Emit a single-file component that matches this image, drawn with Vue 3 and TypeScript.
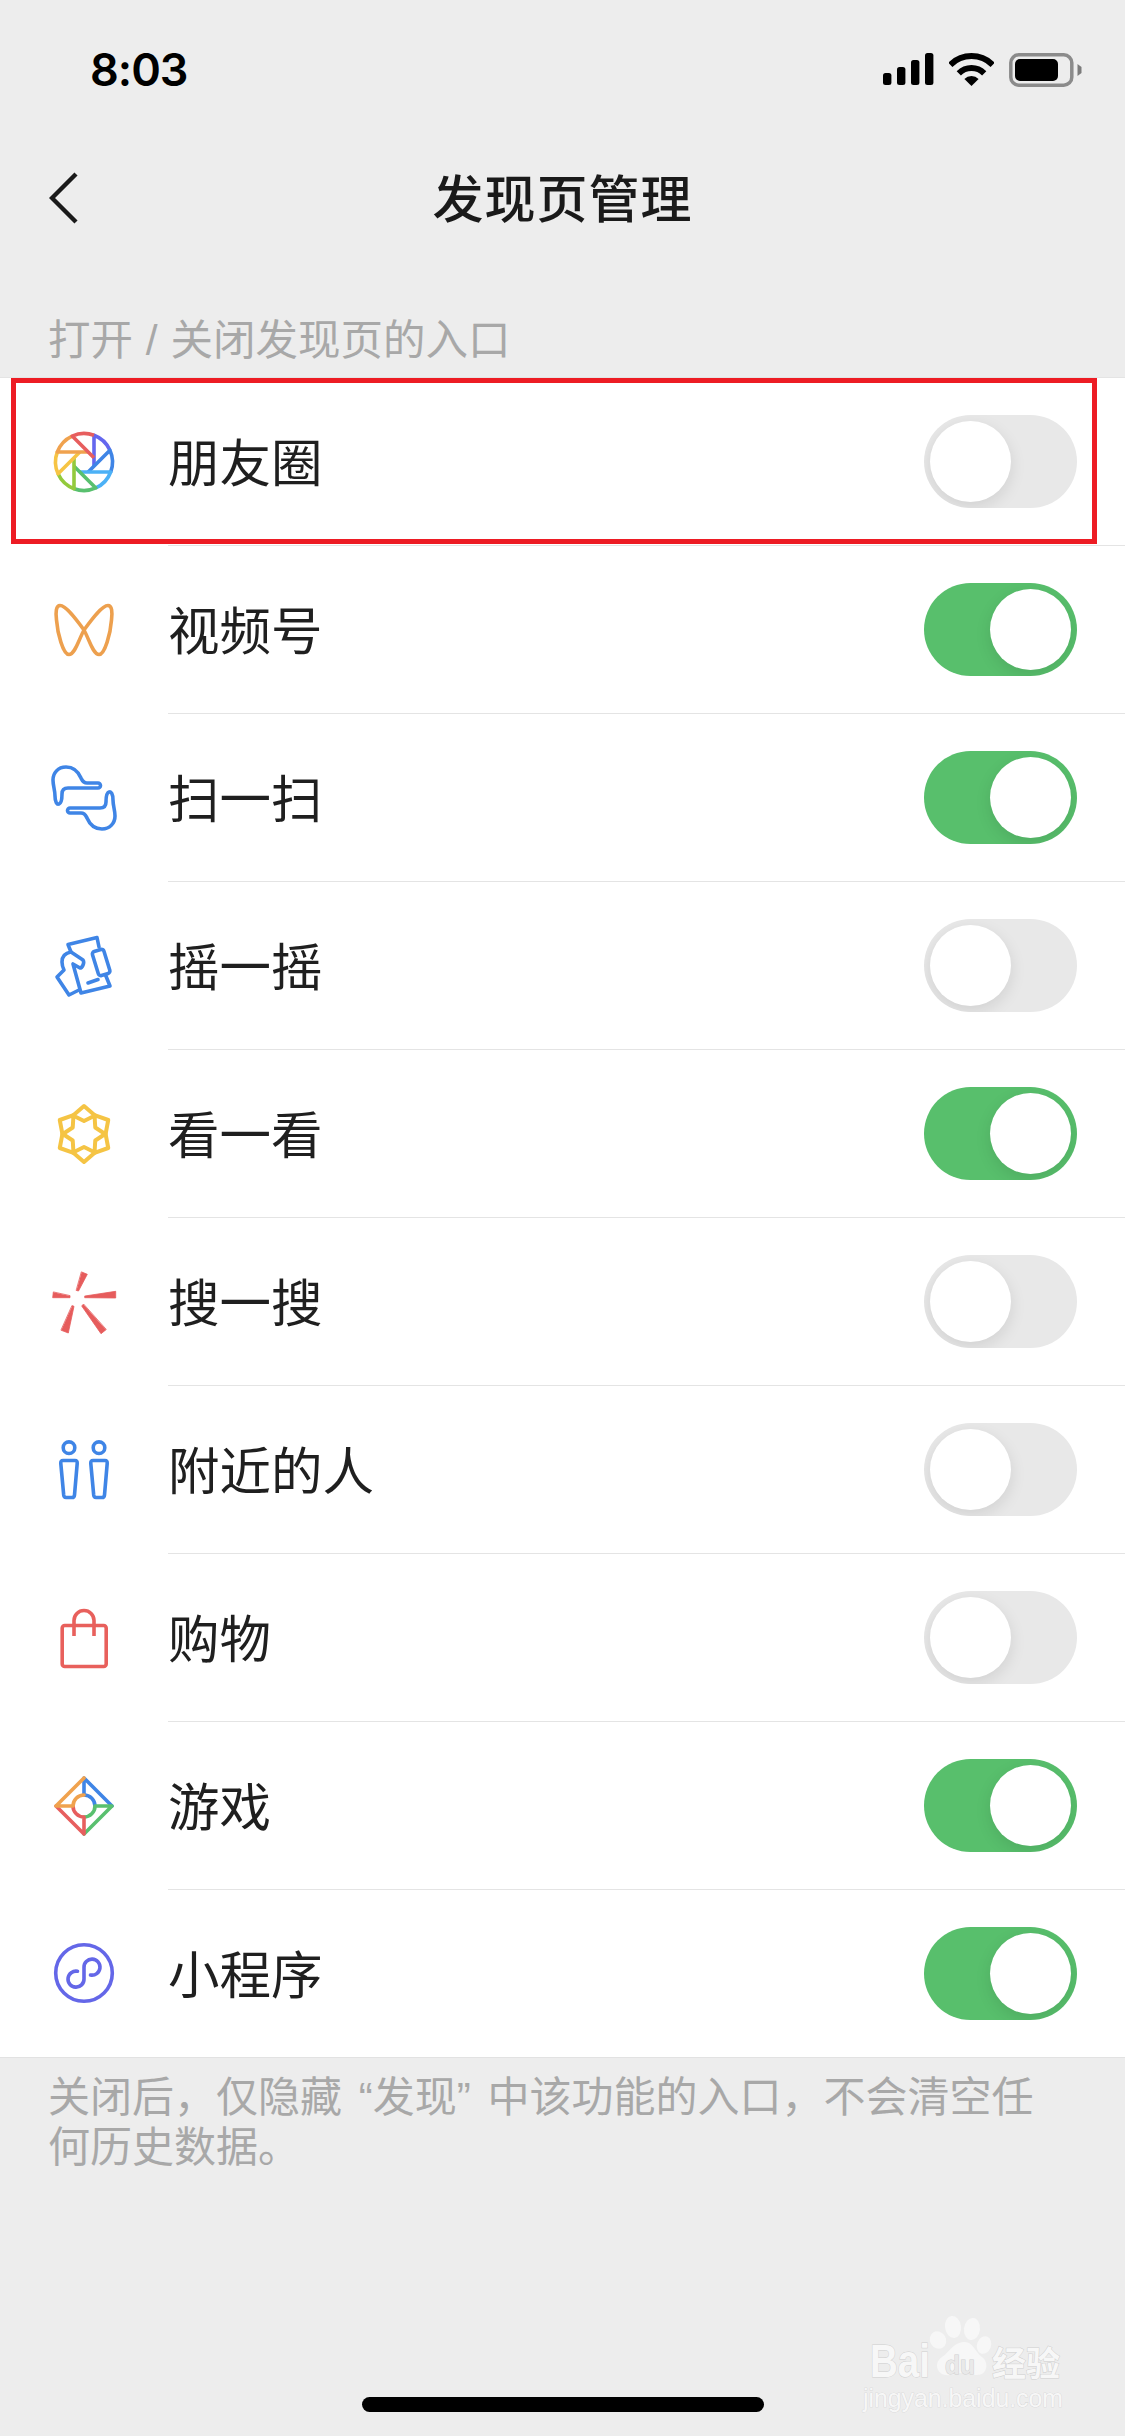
<script setup lang="ts">
interface Entry {
  label: string
  icon: string
  on: boolean
}

const entries: Entry[] = [
  { label: '朋友圈', icon: 'moments', on: false },
  { label: '视频号', icon: 'channels', on: true },
  { label: '扫一扫', icon: 'scan', on: true },
  { label: '摇一摇', icon: 'shake', on: false },
  { label: '看一看', icon: 'look', on: true },
  { label: '搜一搜', icon: 'search', on: false },
  { label: '附近的人', icon: 'nearby', on: false },
  { label: '购物', icon: 'shop', on: false },
  { label: '游戏', icon: 'game', on: true },
  { label: '小程序', icon: 'mini', on: true },
]

const bladeColors = ['#6467ee', '#3f85e6', '#4cb1f6', '#59c06f', '#93ca3c', '#f6c444', '#f0a24e', '#e75e5e']
const gameColors = ['#3f85e6', '#59c06f', '#e75e5e', '#f0a24e']
const scanHalf =
  'M14 -15H3C-1 -15 -2 -18 -3 -20C-6 -27 -11 -31 -18 -31C-26 -31 -31 -25 -31 -18C-31 -12 -29 -8 -29 -2C-29 4 -27 7 -25 6C-22 5 -22 0 -22 -4C-22 -8 -20 -10 -16 -10H14A2.5 2.5 0 0 0 14 -15Z'
const sparks = [
  '-2.3,-30 3.3,-27.7 -5.5,-11 -7.5,-11.5',
  '-30.7,-9.7 -31.3,-4.3 -14,-4.3 -14,-6',
  '1,-6 31.7,-10.7 31.7,-4 1,-4.3',
  '-11.7,3.7 -10,4.3 -15.7,31 -22.7,28.3',
  '-0.7,2.3 -2.3,4 17,31.7 22,27.7',
]
</script>

<template>
  <div class="page">
    <header class="status-bar">
      <span class="time">8:03</span>
      <div class="status-icons">
        <svg width="51" height="33" viewBox="0 0 51 33">
          <rect x="0" y="20" width="8.4" height="12" rx="2.5" />
          <rect x="14" y="14" width="8.4" height="18" rx="2.5" />
          <rect x="28" y="7" width="8.4" height="25" rx="2.5" />
          <rect x="42" y="0" width="8.4" height="32" rx="2.5" />
        </svg>
        <svg width="45" height="33" viewBox="0 0 45 33">
          <path d="M1.3 11.8A30 30 0 0 1 43.7 11.8" fill="none" stroke="#000" stroke-width="6" />
          <path d="M9.8 20.3A18 18 0 0 1 35.2 20.3" fill="none" stroke="#000" stroke-width="6" />
          <path d="M22.5 33L15.4 25.9A10 10 0 0 1 29.6 25.9Z" />
        </svg>
        <svg width="73" height="34" viewBox="0 0 73 34">
          <rect x="1.8" y="1.8" width="61" height="30.4" rx="8" fill="none" stroke="#8b8b8b" stroke-width="3.5" />
          <rect x="6" y="6" width="43" height="22" rx="5" />
          <path d="M68.5 11L72.5 14V20L68.5 23Z" fill="#7c7c7c" />
        </svg>
      </div>
    </header>

    <nav class="nav-bar">
      <div class="nav-back">
        <svg width="30" height="52" viewBox="0 0 30 52">
          <path d="M27 2L3 26L27 50" fill="none" stroke="#1a1a1a" stroke-width="4.4" />
        </svg>
      </div>
      <h1 class="nav-title">发现页管理</h1>
    </nav>

    <p class="section-label">打开 / 关闭发现页的入口</p>

    <section class="list">
      <div v-for="(entry, index) in entries" :key="entry.label" class="row">
        <svg class="icon" width="72" height="72" viewBox="-36 -36 72 72" fill="none" stroke-width="3.6" stroke-linejoin="round" stroke-linecap="round">
          <template v-if="entry.icon === 'moments'">
            <path
              v-for="(color, i) in bladeColors"
              :key="color"
              :transform="`rotate(${i * 45})`"
              :stroke="color"
              stroke-linecap="butt"
              d="M10 4.1V-26.7A28.5 28.5 0 0 1 25.95 -11.8"
            />
          </template>
          <path
            v-else-if="entry.icon === 'channels'"
            stroke="#eda04e"
            d="M0 0C-8 -11 -18 -24.5 -24 -24.5C-28 -24.5 -28.5 -18 -27.5 -10C-26.5 3 -21 24.5 -15 24.5C-9 24.5 -5 9 0 0C8 -11 18 -24.5 24 -24.5C28 -24.5 28.5 -18 27.5 -10C26.5 3 21 24.5 15 24.5C9 24.5 5 9 0 0Z"
          />
          <g v-else-if="entry.icon === 'scan'" stroke="#3f85e6">
            <path :d="scanHalf" />
            <path transform="rotate(180)" :d="scanHalf" />
          </g>
          <g v-else-if="entry.icon === 'shake'" stroke="#3f85e6" transform="translate(0 -2)">
            <path d="M15 -17L13 -26.5L-16 -19.5L-13 -12L-1 -4C1 -1 -2 4 -4 4L-11 0L-3 29L26 22L21.5 11" />
            <path d="M-13 -12C-19 -11 -22 -7 -22 -2C-22 2 -21 4 -20 6L-27 13L-15 31L-5 26" />
            <rect x="11" y="-14" width="12" height="25" rx="2.5" transform="rotate(-17 17 -2)" />
            <path d="M4 19L14 15.5" />
          </g>
          <g v-else-if="entry.icon === 'look'" stroke="#f5c444" stroke-width="4">
            <path
              v-for="i in 6"
              :key="i"
              :transform="`rotate(${i * 60})`"
              d="M0 -28L11 -18.5L0 -13L-11 -18.5Z"
            />
          </g>
          <g v-else-if="entry.icon === 'search'" fill="#e65c5c" stroke="#e65c5c" stroke-width="0.8">
            <polygon v-for="points in sparks" :key="points" :points="points" />
          </g>
          <g v-else-if="entry.icon === 'nearby'" stroke="#3f85e6">
            <template v-for="dx in [0, 30]" :key="dx">
              <g :transform="`translate(${dx} 0)`">
                <circle cx="-15" cy="-22.3" r="5.8" />
                <path d="M-21 -9.5H-9Q-6.5 -9.5 -6.8 -6.5L-9.5 25Q-9.7 27.5 -12 27.5H-18Q-20 27.5 -20.3 25L-23.2 -6.5Q-23.5 -9.5 -21 -9.5Z" />
              </g>
            </template>
          </g>
          <g v-else-if="entry.icon === 'shop'" stroke="#e8605c">
            <rect x="-21.8" y="-12.5" width="44" height="41" rx="2.5" />
            <path d="M-10 -2V-17.5A10 10 0 0 1 10 -17.5V-2" stroke-linecap="butt" />
          </g>
          <template v-else-if="entry.icon === 'game'">
            <path
              v-for="(color, i) in gameColors"
              :key="color"
              :transform="`rotate(${i * 90})`"
              :stroke="color"
              d="M11 0A11 11 0 0 0 0 -11V-28L28 0"
            />
          </template>
          <g v-else-if="entry.icon === 'mini'" stroke="#6467e8">
            <circle r="28.3" />
            <path d="M-6.5 -1.7A8 8 0 1 0 0 6V-5.5A8 8 0 1 1 6.5 2" />
          </g>
        </svg>
        <div class="row-body">
          <span class="row-label">{{ entry.label }}</span>
          <div class="switch" :class="{ 'switch--on': entry.on }">
            <span class="switch-knob"></span>
          </div>
        </div>
        <div v-if="index === 0" class="highlight"></div>
      </div>
    </section>

    <p class="footnote">关闭后，仅隐藏&#8201;&#8201;“发现”&#8201;&#8201;中该功能的入口，不会清空任何历史数据。</p>

    <div class="home-bar"></div>

    <svg class="watermark" width="225" height="120" viewBox="0 0 225 120">
      <g fill="#f7f7f7">
        <ellipse cx="103" cy="27" rx="8" ry="11" transform="rotate(-8 103 27)" />
        <ellipse cx="122" cy="29" rx="8" ry="11" transform="rotate(6 122 29)" />
        <ellipse cx="88" cy="40" rx="8" ry="9" transform="rotate(-30 88 40)" />
        <ellipse cx="134" cy="45" rx="7" ry="9" transform="rotate(20 134 45)" />
        <path d="M115 42C123 42 125 52 132 57C139 62 138 75 127 75C120 75 117 73 112 73C106 73 103 76 96 75C86 74 84 62 92 57C100 52 103 42 115 42Z" />
      </g>
      <g class="wm-text">
        <text x="20" y="77" font-size="47" font-weight="700" textLength="60" lengthAdjust="spacingAndGlyphs">Bai</text>
        <text x="95" y="74" font-size="25" font-weight="700" class="wm-du" textLength="30" lengthAdjust="spacingAndGlyphs">du</text>
        <text x="142" y="76" font-size="34" font-weight="700" textLength="68" lengthAdjust="spacingAndGlyphs">经验</text>
        <text x="13" y="107" font-size="25" class="wm-url" textLength="200" lengthAdjust="spacingAndGlyphs">jingyan.baidu.com</text>
      </g>
    </svg>
  </div>
</template>

<style scoped>
.page {
  position: relative;
  display: flex;
  flex-direction: column;
  width: 1125px;
  min-height: 2436px;
  background: #ededed;
  color: #1a1a1a;
  font-family: "Liberation Sans", "Noto Sans CJK SC", sans-serif;
}

.status-bar {
  display: flex;
  justify-content: space-between;
  align-items: center;
  height: 139px;
  padding: 0 43px 0 90px;
}

.time {
  font-family: Inter, sans-serif;
  font-size: 45px;
  font-weight: 600;
  letter-spacing: -1px;
  color: #000;
}

.status-icons {
  display: flex;
  align-items: center;
  gap: 15px;
}

.nav-bar {
  display: grid;
  grid-template-columns: 1fr auto 1fr;
  align-items: center;
  height: 118px;
}

.nav-back {
  display: flex;
  padding-left: 49px;
}

.nav-title {
  margin: 0;
  padding-top: 6px;
  font-size: 51px;
  font-weight: 500;
  line-height: 60px;
  letter-spacing: 1px;
}

.section-label {
  margin: 0;
  padding: 56px 48px 8px;
  font-size: 42.5px;
  line-height: 56px;
  word-spacing: 1px;
  color: #a8a8a8;
}

.list {
  background: #fff;
  border-top: 1px solid #e4e4e4;
  border-bottom: 1px solid #e2e2e2;
}

.row {
  position: relative;
  display: flex;
  align-items: center;
  height: 168px;
}

.row:last-child {
  height: 167px;
}

.row:last-child .row-body {
  border-bottom: 0;
}

.icon {
  flex: none;
  margin: 0 48px 1px 48px;
}

.row-body {
  display: flex;
  flex: 1;
  justify-content: space-between;
  align-items: center;
  height: 100%;
  box-sizing: border-box;
  padding-right: 48px;
  border-bottom: 1px solid #e4e4e4;
}

.row-label {
  padding-top: 4px;
  font-size: 51.5px;
  line-height: 60px;
  color: #1f1f1f;
}

.switch {
  display: flex;
  box-sizing: border-box;
  width: 153px;
  height: 93px;
  padding: 6px;
  border-radius: 47px;
  background: #e8e8e8;
  overflow: hidden;
}

.switch--on {
  justify-content: flex-end;
  background: #58bf6c;
}

.switch-knob {
  width: 81px;
  height: 81px;
  border-radius: 50%;
  background: #fff;
  box-shadow: 0 5px 16px rgba(0, 0, 0, 0.1);
}

.highlight {
  position: absolute;
  top: 0;
  left: 11px;
  width: 1086px;
  height: 166px;
  box-sizing: border-box;
  border: 5px solid #ed1c24;
}

.footnote {
  margin: 0;
  padding: 15px 66px 0 48px;
  font-size: 42px;
  line-height: 50px;
  color: #a8a8a8;
}

.home-bar {
  align-self: center;
  width: 402px;
  height: 15px;
  margin-top: auto;
  margin-bottom: 24px;
  border-radius: 8px;
  background: #000;
}

.watermark {
  position: absolute;
  left: 850px;
  top: 2300px;
}

.wm-text text {
  fill: #f7f7f7;
  stroke: #cfcfcf;
  stroke-width: 1;
  paint-order: stroke;
  font-family: "Liberation Sans", "Noto Sans CJK SC", sans-serif;
}

.wm-text .wm-du {
  fill: #e9e9e9;
}

.wm-text .wm-url {
  stroke-width: 0.6;
}
</style>

<style>
html,
body {
  background: #ededed;
}
</style>
